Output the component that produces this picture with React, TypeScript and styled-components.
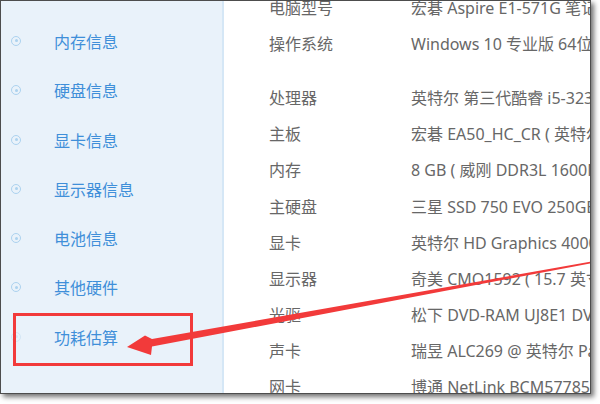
import React from 'react';
import styled, { createGlobalStyle } from 'styled-components';

const Global = createGlobalStyle`
  html, body { margin: 0; padding: 0; background: #ffffff; }
  body {
    width: 600px; height: 404px; overflow: hidden;
    font-family: "Noto Sans", "Noto Sans CJK SC", sans-serif;
  }
`;

const Frame = styled.div`
  position: relative;
  width: 591px;
  height: 394px;
  box-sizing: border-box;
  border: 1px solid #4d4d4d;
  box-shadow: 3px 3px 5px rgba(0, 0, 0, 0.55);
  display: flex;
  overflow: hidden;
  background: #ffffff;
`;

const Sidebar = styled.div`
  width: 221px;
  flex: none;
  background: #e9f2fa;
  border-right: 2px solid #d5e7f6;
  display: flex;
  flex-direction: column;
`;

const NavList = styled.div`
  margin-top: -34px;
  display: flex;
  flex-direction: column;
`;

const NavItem = styled.div`
  height: 49.3px;
  flex: none;
  display: flex;
  align-items: center;
  padding-left: 10px;
`;

const NavIcon = styled.span<{ $faded?: boolean }>`
  width: 10px;
  height: 10px;
  box-sizing: border-box;
  border-radius: 50%;
  border: 1.5px solid ${(p) => (p.$faded ? '#d3e6f5' : '#acd2ef')};
  display: flex;
  align-items: center;
  justify-content: center;
  &::after {
    content: '';
    width: 3px;
    height: 3px;
    border-radius: 50%;
    background: ${(p) => (p.$faded ? '#d3e6f5' : '#acd2ef')};
  }
`;

const NavLabel = styled.span`
  margin-left: 33px;
  font-family: "Noto Sans CJK SC", sans-serif;
  font-size: 16px;
  color: #3f8fd9;
  white-space: nowrap;
`;

const Content = styled.div`
  flex: 1;
  min-width: 0;
  display: flex;
  flex-direction: column;
  padding-left: 45px;
  overflow: hidden;
`;

const InfoList = styled.div`
  margin-top: -12px;
  display: flex;
  flex-direction: column;
`;

const InfoRow = styled.div<{ $gapBefore?: boolean }>`
  height: 36.1px;
  flex: none;
  display: flex;
  align-items: center;
  margin-top: ${(p) => (p.$gapBefore ? '18px' : '0')};
  font-size: 16px;
  color: #676767;
  white-space: nowrap;
`;

const InfoLabel = styled.span`
  width: 142px;
  flex: none;
  font-family: "Noto Sans CJK SC", sans-serif;
`;

const InfoValue = styled.span`
  white-space: nowrap;
  font-family: "Noto Sans", "Noto Sans CJK SC", sans-serif;
`;

const Overlay = styled.svg`
  position: absolute;
  left: -1px;
  top: -1px;
  width: 600px;
  height: 404px;
  pointer-events: none;
`;

const navItems = [
  '主板信息',
  '内存信息',
  '硬盘信息',
  '显卡信息',
  '显示器信息',
  '电池信息',
  '其他硬件',
  '功耗估算',
];

const info: { label: string; value: string; gap?: boolean }[] = [
  { label: '电脑型号', value: '宏碁 Aspire E1-571G 笔记本电脑' },
  { label: '操作系统', value: 'Windows 10 专业版 64位（DirectX 12）' },
  { label: '处理器', value: '英特尔 第三代酷睿 i5-3230M @ 2.60GHz 双核', gap: true },
  { label: '主板', value: '宏碁 EA50_HC_CR ( 英特尔 HM77 芯片组 )' },
  { label: '内存', value: '8 GB ( 威刚 DDR3L 1600MHz )' },
  { label: '主硬盘', value: '三星 SSD 750 EVO 250GB ( 250 GB / 固态硬盘 )' },
  { label: '显卡', value: '英特尔 HD Graphics 4000 ( 2112 MB / 宏碁 )' },
  { label: '显示器', value: '奇美 CMO1592 ( 15.7 英寸 )' },
  { label: '光驱', value: '松下 DVD-RAM UJ8E1 DVD刻录机' },
  { label: '声卡', value: '瑞昱 ALC269 @ 英特尔 Panther Point High Definition Audio' },
  { label: '网卡', value: '博通 NetLink BCM57785 Gigabit Ethernet / 宏碁' },
];

export default function App() {
  return (
    <>
      <Global />
      <Frame>
        <Sidebar>
          <NavList>
            {navItems.map((n, i) => (
              <NavItem key={n}>
                <NavIcon $faded={i === navItems.length - 1} />
                <NavLabel>{n}</NavLabel>
              </NavItem>
            ))}
          </NavList>
        </Sidebar>
        <Content>
          <InfoList>
            {info.map((r) => (
              <InfoRow key={r.label} $gapBefore={r.gap}>
                <InfoLabel>{r.label}</InfoLabel>
                <InfoValue>{r.value}</InfoValue>
              </InfoRow>
            ))}
          </InfoList>
        </Content>
        <Overlay viewBox="0 0 600 404">
          <rect x="14.5" y="314.5" width="177" height="50" fill="none" stroke="#f23a3a" strokeWidth="3" />
          <polygon
            points="127,347 145,335.5 152,339 592,261.5 592,263 152,346.5 151,355"
            fill="#f23a3a"
          />
        </Overlay>
      </Frame>
    </>
  );
}
